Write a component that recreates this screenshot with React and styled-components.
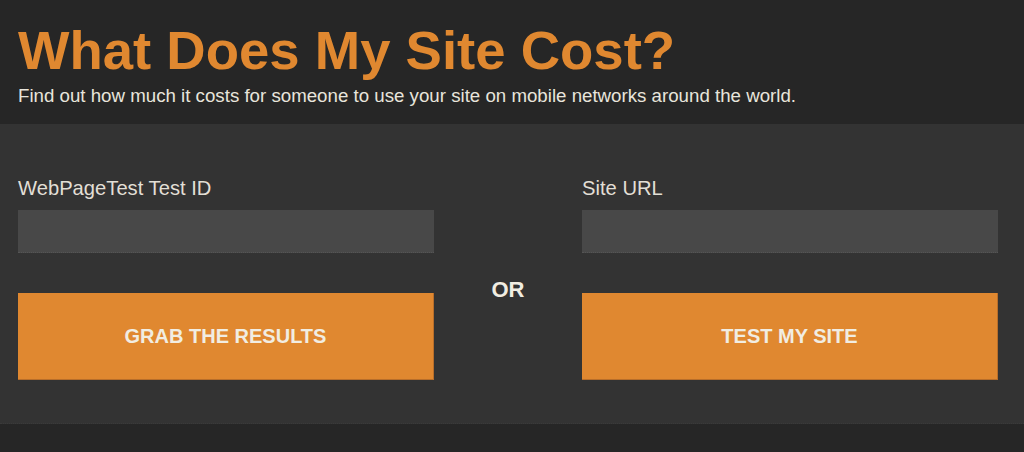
import React from "react";
import styled, { createGlobalStyle } from "styled-components";

const Global = createGlobalStyle`
  html, body { margin: 0; padding: 0; background: #262626; }
  body { font-family: "Liberation Sans", Arial, Helvetica, sans-serif; }
  * { box-sizing: border-box; }
`;

const Header = styled.header`
  height: 124px;
  padding: 24px 18px 0;
  background: #262626;
`;

const Title = styled.h1`
  margin: 0;
  font-size: 54.5px;
  line-height: 54px;
  font-weight: 700;
  color: #e08830;
`;

const Subtitle = styled.p`
  margin: 8px 0 0;
  font-size: 18.7px;
  line-height: 19px;
  color: #e8e5dc;
`;

const Panel = styled.section`
  background: #333333;
  padding: 54px 26px 43px 18px;
  display: grid;
  grid-template-columns: 1fr 148px 1fr;
  border-bottom: 1px dotted #3a3a3a;
`;

const Field = styled.div`
  display: flex;
  flex-direction: column;
`;

const Label = styled.label`
  font-size: 20.2px;
  line-height: 20px;
  color: #e2dfd6;
`;

const Input = styled.input`
  margin-top: 12px;
  height: 43px;
  border: none;
  border-bottom: 1px dotted #555;
  background: #484848;
  color: #eee;
  font-family: inherit;
  font-size: 18px;
  padding: 0 12px;
  outline: none;
`;

const Button = styled.button`
  margin-top: 40px;
  height: 87px;
  border: none;
  border-right: 1px solid #b86e2a;
  border-bottom: 1px solid #b86e2a;
  background: #e08830;
  color: #f1ede2;
  font-family: inherit;
  font-size: 20px;
  font-weight: 700;
  text-transform: uppercase;
  cursor: pointer;
`;

const Divider = styled.div`
  padding-top: 101px;
  text-align: center;
  font-size: 22px;
  line-height: 22px;
  font-weight: 700;
  color: #f1ede2;
`;

export default function App() {
  return (
    <>
      <Global />
      <Header>
        <Title>What Does My Site Cost?</Title>
        <Subtitle>
          Find out how much it costs for someone to use your site on mobile networks around the world.
        </Subtitle>
      </Header>
      <Panel>
        <Field>
          <Label htmlFor="testid">WebPageTest Test ID</Label>
          <Input id="testid" type="text" />
          <Button>Grab the Results</Button>
        </Field>
        <Divider>OR</Divider>
        <Field>
          <Label htmlFor="url">Site URL</Label>
          <Input id="url" type="text" />
          <Button>Test My Site</Button>
        </Field>
      </Panel>
    </>
  );
}
